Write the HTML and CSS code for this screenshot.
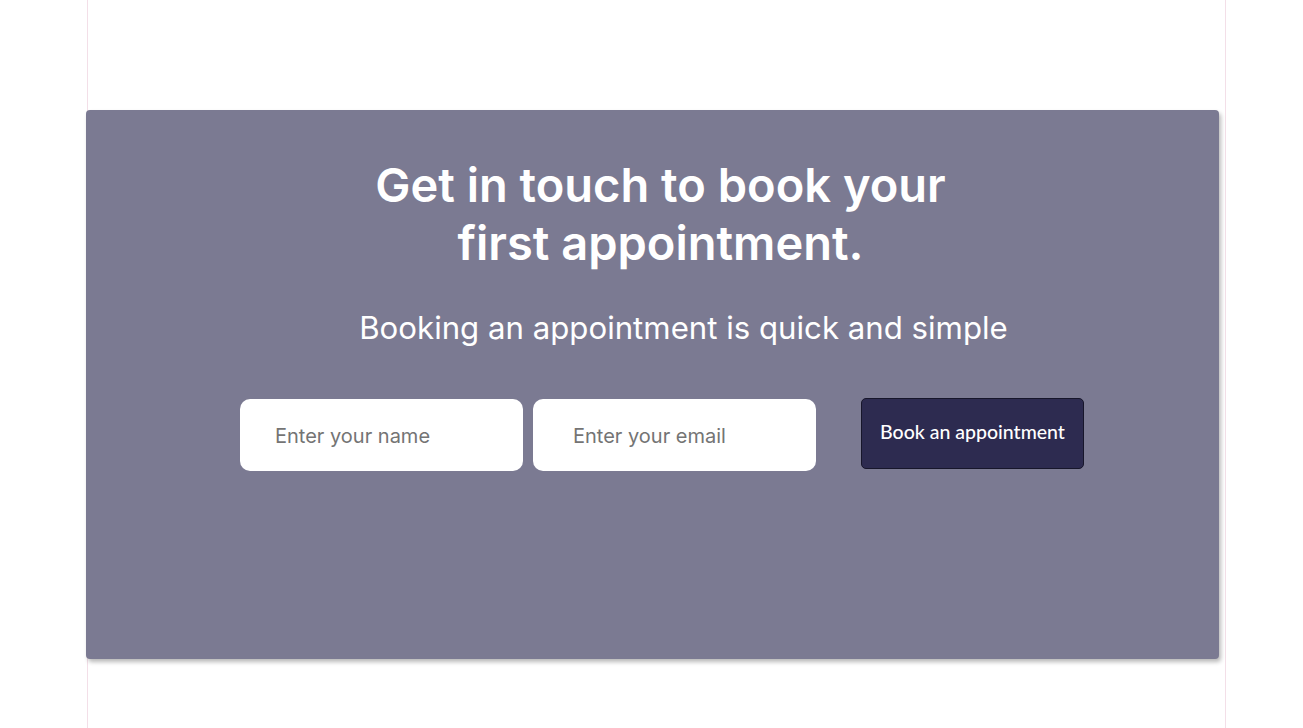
FILE: index.html
```html
<!DOCTYPE html>
<html lang="en">
<head>
<meta charset="utf-8">
<title>Book an appointment</title>
<link rel="stylesheet" href="styles.css">
</head>
<body>
<div class="page">
  <section class="card">
    <h1 class="title">Get in touch to book your<br>first appointment.</h1>
    <p class="subtitle">Booking an appointment is quick and simple</p>
    <form class="form">
      <div class="fields">
        <input class="field" type="text" placeholder="Enter your name">
        <input class="field field-email" type="email" placeholder="Enter your email">
      </div>
      <button class="btn" type="button">Book an appointment</button>
    </form>
  </section>
</div>
</body>
</html>
```
FILE: styles.css
```css
* { box-sizing: border-box; }
html, body { margin: 0; padding: 0; background: #ffffff; }
body { font-family: Inter, "Noto Sans", sans-serif; }
.page {
  margin-left: 87px;
  width: 1139px;
  min-height: 100vh;
  border-left: 1px solid #f3dfe8;
  border-right: 1px solid #f3dfe8;
  padding-top: 110px;
}
.card {
  margin-left: -2px;
  width: 1133px;
  height: 549px;
  background: #7b7a92;
  border-radius: 4px;
  box-shadow: 2px 3px 4px rgba(0,0,0,0.28);
  display: flex;
  flex-direction: column;
  align-items: center;
  padding-top: 46px;
}
.title {
  margin: 0;
  color: #ffffff;
  font-family: Inter, sans-serif;
  font-weight: 600;
  font-size: 47px;
  line-height: 58px;
  text-align: center;
  padding-left: 16px;
}
.subtitle {
  margin: 36px 0 0 0;
  color: #ffffff;
  font-family: Inter, sans-serif;
  font-weight: 400;
  font-size: 31.2px;
  line-height: 40px;
  padding-left: 62px;
}
.form {
  display: flex;
  align-items: flex-start;
  margin-top: 51px;
  padding-left: 19px;
  gap: 45px;
}
.fields { display: flex; gap: 10px; }
.field {
  width: 283px;
  height: 72px;
  border: none;
  border-radius: 10px;
  background: #ffffff;
  padding: 2px 0 0 35px;
  font-family: Inter, sans-serif;
  font-size: 20px;
  color: #333;
  outline: none;
}
.field-email { padding-left: 40px; }
.field::placeholder { color: #747474; }
.btn {
  margin-top: -1px;
  width: 223px;
  height: 71px;
  background: #2d2b50;
  border: 1px solid #17162b;
  border-radius: 5px;
  color: #ffffff;
  font-family: Lato, sans-serif;
  font-size: 19.5px;
  font-weight: 500;
  cursor: pointer;
  padding: 0 0 4px 0;
}
```
